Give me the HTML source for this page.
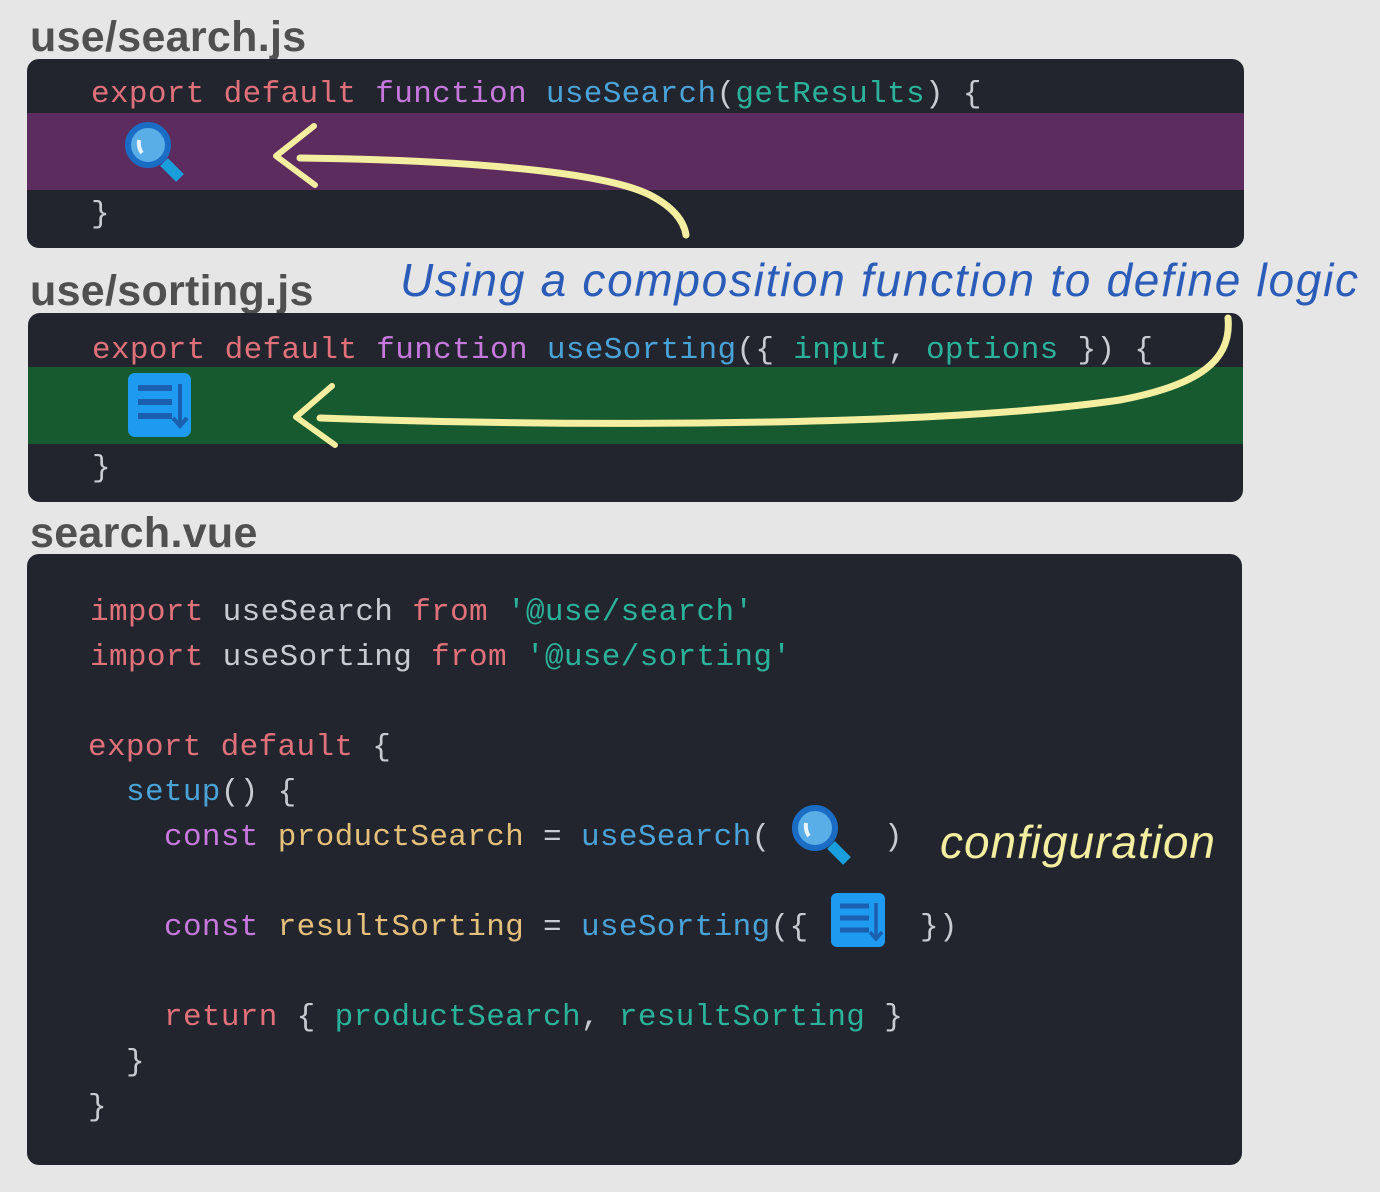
<!DOCTYPE html>
<html><head><meta charset="utf-8"><style>
body{margin:0;width:1380px;height:1192px;background:#e6e6e6;position:relative;overflow:hidden;font-family:"Liberation Sans",sans-serif}
.t{position:absolute;font-weight:bold;color:#505050;font-size:43px;letter-spacing:0.3px}
.p{position:absolute;background:#22252d;border-radius:12px;overflow:hidden}
.c{position:absolute;font-family:"Liberation Mono","DejaVu Sans Mono",monospace;font-size:31px;letter-spacing:0.35px;line-height:36px;white-space:pre;color:#c8ccd2}
.r{color:#e0707a}.k{color:#c678dd}.b{color:#4aa3d8}.g{color:#2bb39a}.y{color:#e5c07b}.w{color:#c8ccd2}
</style></head><body>
<div class="t" style="left:30px;top:13px">use/search.js</div>
<div class="p" style="left:27px;top:59px;width:1217px;height:189px">
 <div style="position:absolute;left:0;top:54px;width:100%;height:77px;background:#5c2c5f"></div>
</div>
<div class="c" style="left:91px;top:77px"><span class="r">export default</span> <span class="k">function</span> <span class="b">useSearch</span>(<span class="g">getResults</span>) {</div>
<div class="c" style="left:91px;top:197px">}</div>

<div class="t" style="left:30px;top:267px">use/sorting.js</div>
<div class="p" style="left:28px;top:313px;width:1215px;height:189px">
 <div style="position:absolute;left:0;top:54px;width:100%;height:77px;background:#185a30"></div>
</div>
<div class="c" style="left:92px;top:333px"><span class="r">export default</span> <span class="k">function</span> <span class="b">useSorting</span>({ <span class="g">input</span>, <span class="g">options</span> }) {</div>
<div class="c" style="left:92px;top:451px">}</div>

<div class="t" style="left:30px;top:509px">search.vue</div>
<div class="p" style="left:27px;top:554px;width:1215px;height:611px"></div>
<div class="c" style="left:90px;top:595px"><span class="r">import</span> useSearch <span class="r">from</span> <span class="g">'@use/search'</span></div>
<div class="c" style="left:90px;top:640px"><span class="r">import</span> useSorting <span class="r">from</span> <span class="g">'@use/sorting'</span></div>
<div class="c" style="left:88px;top:730px"><span class="r">export default</span> {</div>
<div class="c" style="left:126px;top:775px"><span class="b">setup</span>() {</div>
<div class="c" style="left:164px;top:820px"><span class="k">const</span> <span class="y">productSearch</span> = <span class="b">useSearch</span>(</div>
<div class="c" style="left:884px;top:820px">)</div>
<div class="c" style="left:164px;top:910px"><span class="k">const</span> <span class="y">resultSorting</span> = <span class="b">useSorting</span>({</div>
<div class="c" style="left:920px;top:910px">})</div>
<div class="c" style="left:164px;top:1000px"><span class="r">return</span> { <span class="g">productSearch</span>, <span class="g">resultSorting</span> }</div>
<div class="c" style="left:126px;top:1045px">}</div>
<div class="c" style="left:88px;top:1090px">}</div>

<svg width="1380" height="1192" style="position:absolute;left:0;top:0" xmlns="http://www.w3.org/2000/svg">
 <g fill="none" stroke="#f3eea0" stroke-linecap="round">
  <path d="M300 158 C450 160 600 170 650 195 C675 208 684 222 686 235" stroke-width="7"/>
  <path d="M276 156 L314 126 M276 156 L315 185" stroke-width="6"/>
  <path d="M1228 318 C1232 360 1200 385 1120 400 C950 425 600 428 320 418" stroke-width="7"/>
  <path d="M296 417 L332 386 M296 417 L335 445" stroke-width="6"/>
 </g>
 <text x="400" y="296" textLength="958" font-family="Liberation Sans, sans-serif" font-style="italic" font-size="46" fill="#2b5cb8">Using a composition function to define logic</text>
 <text x="940" y="858" textLength="275" font-family="Liberation Sans, sans-serif" font-style="italic" font-size="46" fill="#f3eea0">configuration</text>
 <g id="mag">
  <line x1="164" y1="162" x2="180" y2="178" stroke="#1a9fdc" stroke-width="11"/>
  <circle cx="148" cy="145" r="20" fill="#5aaee8" stroke="#1a6cc4" stroke-width="6"/>
  <path d="M139 140 Q138 148 142 153" stroke="#e8f4ff" stroke-width="4" fill="none"/>
 </g>
 <use href="#mag" transform="translate(667 683)"/>
 <rect x="128" y="373" width="63" height="64" rx="7" fill="#1e9bf0"/>
 <path d="M138 388 H172 M138 402 H172 M138 416 H172" stroke="#1a5fb0" stroke-width="6"/>
 <path d="M180 384 V424 M173 418 L180 426 L187 418" stroke="#1a5fb0" stroke-width="4" fill="none"/>
 <rect x="831" y="893" width="54" height="54" rx="6" fill="#1e9bf0"/>
 <path d="M840 906 H869 M840 918 H869 M840 930 H869" stroke="#1a5fb0" stroke-width="5"/>
 <path d="M876 903 V937 M870 932 L876 939 L882 932" stroke="#1a5fb0" stroke-width="3.5" fill="none"/>
</svg>
</body></html>
